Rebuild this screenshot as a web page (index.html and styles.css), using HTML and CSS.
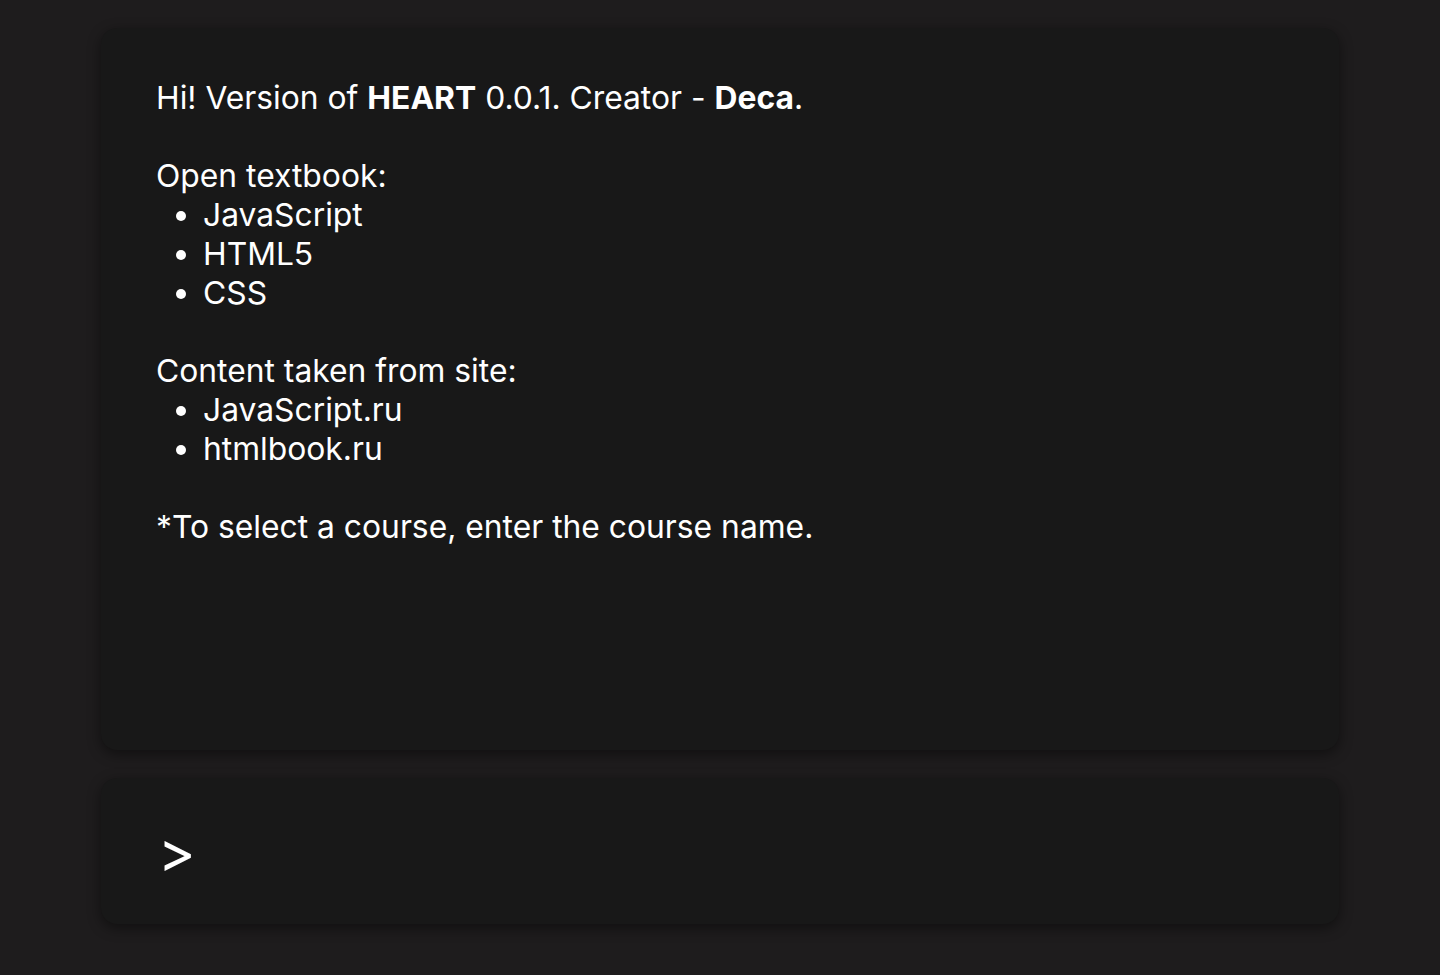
FILE: index.html
```html
<!DOCTYPE html>
<html>
<head>
<meta charset="utf-8">
<link rel="stylesheet" href="styles.css">
</head>
<body>
<main class="terminal">
  <section class="output">
    <p class="line">Hi! Version of <b>HEART</b> 0.0.1. Creator - <b>Deca</b>.</p>
    <p class="line blank">&nbsp;</p>
    <p class="line">Open textbook:</p>
    <ul class="list">
      <li>JavaScript</li>
      <li>HTML5</li>
      <li>CSS</li>
    </ul>
    <p class="line blank">&nbsp;</p>
    <p class="line">Content taken from site:</p>
    <ul class="list">
      <li>JavaScript.ru</li>
      <li>htmlbook.ru</li>
    </ul>
    <p class="line blank">&nbsp;</p>
    <p class="line">*To select a course, enter the course name.</p>
  </section>
  <section class="input">
    <span class="prompt">&gt;</span>
  </section>
</main>
</body>
</html>
```
FILE: styles.css
```css
html, body {
  margin: 0;
  padding: 0;
  background: #1e1c1d;
  height: 100%;
}
body {
  font-family: Inter, "Noto Sans", sans-serif;
  color: #ffffff;
}
.terminal {
  width: 1238px;
  margin: 0 auto;
  padding-top: 28px;
  display: flex;
  flex-direction: column;
  gap: 28px;
}
.output, .input {
  background: #181818;
  border-radius: 16px;
  box-shadow: 0 4px 14px rgba(0, 0, 0, 0.45);
}
.output {
  height: 722px;
  box-sizing: border-box;
  padding: 50px 55px 0;
  font-size: 31.8px;
  line-height: 39px;
}
.line {
  margin: 0;
}
.line b {
  font-weight: 700;
}
.list {
  margin: 0;
  padding-left: 47px;
}
.input {
  height: 146px;
  display: flex;
  align-items: center;
  padding-left: 57px;
}
.prompt {
  font-size: 57px;
  line-height: 1;
}
```
